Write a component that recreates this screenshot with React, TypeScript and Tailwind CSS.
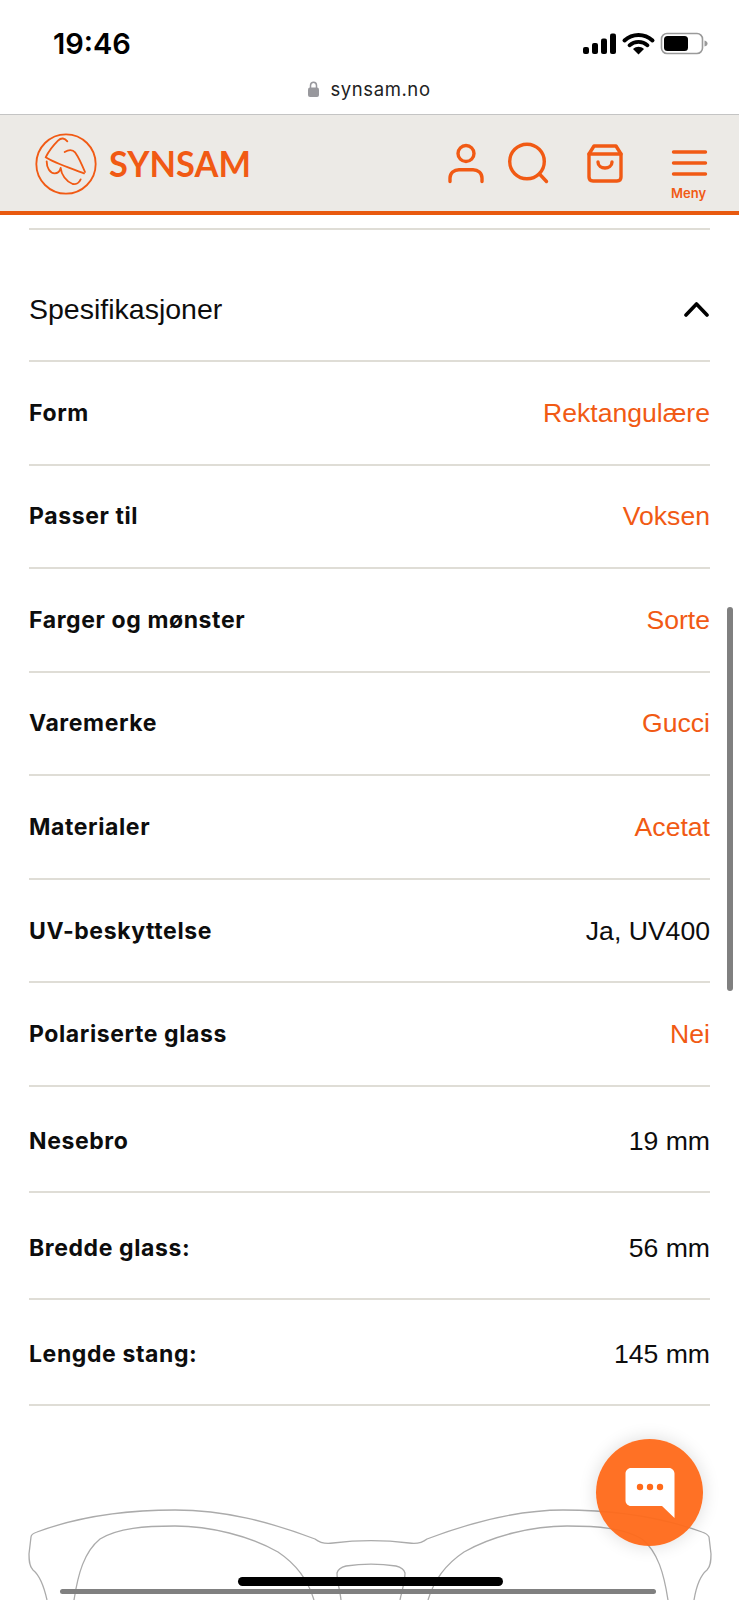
const orange = "#F15A14";

const rows: { label: string; value: string; link?: boolean; tall?: boolean }[] = [
  { label: "Form", value: "Rektangulære", link: true },
  { label: "Passer til", value: "Voksen", link: true },
  { label: "Farger og mønster", value: "Sorte", link: true },
  { label: "Varemerke", value: "Gucci", link: true },
  { label: "Materialer", value: "Acetat", link: true },
  { label: "UV-beskyttelse", value: "Ja, UV400" },
  { label: "Polariserte glass", value: "Nei", link: true },
  { label: "Nesebro", value: "19 mm", tall: true },
  { label: "Bredde glass:", value: "56 mm", tall: true },
  { label: "Lengde stang:", value: "145 mm", tall: true },
];

function StatusIcons() {
  return (
    <svg width="126" height="24" viewBox="0 0 126 24" className="block">
      {/* signal */}
      <rect x="1" y="15" width="6" height="7" rx="2" fill="#000" />
      <rect x="10" y="11" width="6" height="11" rx="2" fill="#000" />
      <rect x="19" y="6.5" width="6" height="15.5" rx="2" fill="#000" />
      <rect x="28" y="1.5" width="6" height="20.5" rx="2" fill="#000" />
      {/* wifi */}
      <path d="M42.5 8.5C50.5 1 62.5 1 70.5 8.5" fill="none" stroke="#000" strokeWidth="4" strokeLinecap="round" />
      <path d="M47.5 13.3C52.5 8.6 60.5 8.6 65.5 13.3" fill="none" stroke="#000" strokeWidth="3.8" strokeLinecap="round" />
      <path d="M51 17L56.5 22.500L62 17C58.500 14 54.500 14 51 17Z" fill="#000" />
      {/* battery */}
      <rect x="79.5" y="1.5" width="41" height="20" rx="5.5" fill="none" stroke="#9a9a9a" strokeWidth="1.6" />
      <rect x="82" y="4" width="24" height="15" rx="3.5" fill="#000" />
      <path d="M122.5 8.5C124.5 9 125.5 10 125.5 11.5C125.5 13 124.5 14 122.5 14.5Z" fill="#9a9a9a" />
    </svg>
  );
}

function Logo() {
  return (
    <svg width="72" height="72" viewBox="0 0 216 216" fill="none" stroke={orange} strokeWidth="5.5" strokeLinecap="round" strokeLinejoin="round">
      <circle cx="108" cy="108" r="89" />
      <path d="M112 40C104 30 94 28 84 38C70 52 56 70 47 88C70 104 120 120 162 136" />
      <path d="M104 72C114 66 126 62 136 74C146 88 156 110 165 132" />
      <path d="M50 100C50 120 60 136 74 136C84 136 90 128 92 120C94 140 108 160 128 168C138 170 148 164 152 154" />
    </svg>
  );
}

function HeaderIcons() {
  return (
    <svg width="280" height="50" viewBox="0 0 280 50" fill="none" stroke={orange} strokeWidth="3.4" strokeLinecap="round" strokeLinejoin="round" className="block">
      {/* user */}
      <circle cx="26" cy="16.500" r="8" />
      <path d="M10 44.500V41C10 36 14 32.700 19 32.700H33C38 32.700 42 36 42 41V44.500" />
      {/* search */}
      <circle cx="87" cy="24.500" r="17.300" />
      <path d="M99.500 37L106.500 44.500" />
      {/* bag */}
      <path d="M149 17L154 9H176L181 17V40C181 42.500 179.500 44 177 44H153C150.500 44 149 42.500 149 40Z" />
      <path d="M149 17H181" />
      <path d="M158 25C158 33 172 33 172 25" />
      {/* menu */}
      <path d="M233.500 15H265.500M233.500 26H265.500M233.500 37H265.500" />
    </svg>
  );
}

function GlassesOutline() {
  return (
    <svg width="739" height="106" viewBox="0 0 739 106" fill="none" stroke="#ababab" strokeWidth="1.300" className="block">
      <path d="M47 106C43 88 38 80 33 76C29 72 29 66 29 60L31 43C31 41 34 39 37 38C80 22 130 16 175 16C225 16 270 28 315 45C320 49 327 50 333 49C358 46 384 46 409 49C415 50 422 49 427 45C472 28 517 16 563 16C610 16 658 22 702 38C705 39 708 41 709 43L711 60C711 66 711 72 707 76C702 80 697 88 694 106" />
      <path d="M74 106C78 80 84 58 100 45C118 34 145 32 175 32C210 32 250 42 278 58C296 70 308 86 314 106" />
      <path d="M428 106C434 86 446 70 464 58C492 42 532 32 567 32C597 32 624 34 642 45C658 58 664 80 668 106" />
      <path d="M341 106C340 96 337 88 337 79C338 75 342 73 346 72C362 69.500 380 69.500 396 72C400 73 404 75 405 79C405 88 402 96 400 106" />
    </svg>
  );
}

export default function App() {
  return (
    <div className="relative h-[1600px] w-[739px] overflow-hidden bg-white font-['Liberation_Sans',sans-serif]">
      {/* Status bar */}
      <div className="flex h-[70px] items-start justify-between pl-[53px] pr-[31px] pt-[27px]">
        <span className="font-['Inter',sans-serif] text-[29px] leading-[34px] font-semibold text-black">19:46</span>
        <div className="pt-[5px]">
          <StatusIcons />
        </div>
      </div>

      {/* Address bar */}
      <div className="flex h-[44px] items-center justify-center gap-[11px] pb-[6px]">
        <svg width="11" height="16" viewBox="0 0 11 16" className="block">
          <path d="M2.500 7V4.500C2.500 2.500 3.800 1.200 5.500 1.200C7.200 1.200 8.500 2.500 8.500 4.500V7" fill="none" stroke="#98989d" strokeWidth="1.500" />
          <rect x="0" y="6.500" width="11" height="9.500" rx="2" fill="#98989d" />
        </svg>
        <span className="font-['Inter',sans-serif] text-[18.500px] leading-[24px] tracking-[0.6px] text-[#222]">synsam.no</span>
      </div>

      {/* Site header */}
      <header className="relative flex h-[101px] items-start border-t border-[#c4c4c4] border-b-4 border-b-[#E8590F] bg-[#ECEAE6] pl-[30px]">
        <div className="pt-[13px]">
          <Logo />
        </div>
        <span className="ml-[7px] mt-[25px] origin-left scale-x-[0.93] font-['Lato',sans-serif] text-[37px] leading-[46px] font-bold text-[#F15A14]">SYNSAM</span>
        <div className="absolute left-[440px] top-[22px]">
          <HeaderIcons />
        </div>
        <span className="absolute left-[671px] top-[70px] font-['Inter',sans-serif] text-[13px] leading-[16px] font-semibold text-[#F15A14]">Meny</span>
      </header>

      {/* Specs */}
      <main className="px-[29px] pt-[13px]">
        <div className="flex h-[134px] items-center justify-between border-y-2 border-[#DFDDD6] pt-[27px]">
          <h2 className="text-[28.500px] leading-[34px] font-normal text-[#0d0d0d]">Spesifikasjoner</h2>
          <svg width="25" height="16" viewBox="0 0 25 16" fill="none" stroke="#000" strokeWidth="3.600" strokeLinecap="round" strokeLinejoin="round" className="mr-[1px]">
            <path d="M2 14L12.500 3L23 14" />
          </svg>
        </div>
        {rows.map((row) => (
          <div
            key={row.label}
            className={`flex items-center justify-between border-b-2 border-[#DFDDD6] ${row.tall ? "h-[106.500px] pt-[4px]" : "h-[103.550px]"}`}
          >
            <span className="font-['Inter',sans-serif] text-[23px] leading-[30px] font-bold tracking-[0.6px] text-[#0d0d0d]">{row.label}</span>
            <span className={`text-[26.600px] leading-[32px] ${row.link ? "text-[#F15A14]" : "text-[#0d0d0d]"}`}>{row.value}</span>
          </div>
        ))}
      </main>

      {/* Frame outline peeking in at the bottom */}
      <div className="absolute bottom-0 left-0">
        <GlassesOutline />
      </div>

      {/* Page scrollbar */}
      <div className="absolute left-[727px] top-[607px] h-[384px] w-[6px] rounded-full bg-[#808080]" />

      {/* Chat button */}
      <div className="absolute left-[596px] top-[1439px] flex h-[107px] w-[107px] items-center justify-center rounded-full bg-[#FF6A1A]/95 shadow-[0_0_18px_rgba(0,0,0,0.14)]">
        <svg width="50" height="50" viewBox="0 0 50 50" className="block">
          <path d="M6 0H44C47 0 49.500 2.500 49.500 5.500V50L37 38H6C3 38 0.500 35.500 0.500 32.500V5.500C0.500 2.500 3 0 6 0Z" fill="#fff" />
          <circle cx="15" cy="19" r="3.200" fill="#FF6A1A" />
          <circle cx="25" cy="19" r="3.200" fill="#FF6A1A" />
          <circle cx="35" cy="19" r="3.200" fill="#FF6A1A" />
        </svg>
      </div>

      {/* Home indicator + horizontal scrollbar */}
      <div className="absolute left-[238px] top-[1577px] h-[9px] w-[265px] rounded-full bg-black" />
      <div className="absolute left-[60px] top-[1589px] h-[5px] w-[596px] rounded-full bg-[#808080]" />
    </div>
  );
}
